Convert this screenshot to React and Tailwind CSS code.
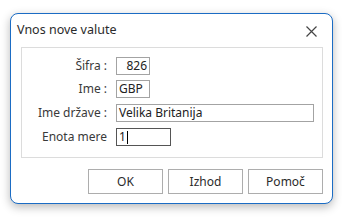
import React from 'react';

const rows = [
  { label: 'Šifra :', value: '826', w: 'w-[34px]', align: 'text-right', mt: 'mt-[9px]' },
  { label: 'Ime :', value: 'GBP', w: 'w-[34px]', align: 'text-left', mt: 'mt-[5px]' },
  { label: 'Ime države :', value: 'Velika Britanija', w: 'w-[198px]', align: 'text-left', mt: 'mt-[6px]' },
  { label: 'Enota mere', value: '1', w: 'w-[55px]', align: 'text-left', mt: 'mt-[6px]', focus: true },
];

export default function App() {
  return (
    <div className="w-[342px] h-[220px] bg-white overflow-hidden" style={{ fontFamily: '"Noto Sans", "Open Sans", sans-serif' }}>
      {/* okno */}
      <div className="ml-[10px] mt-[13px] w-[323px] h-[191px] bg-white border border-[#1b6cc4] rounded-[8px] shadow-[0_3px_10px_rgba(0,0,0,0.28)] flex flex-col">
        <div className="h-[33px] flex items-center justify-between pl-[6px] pr-[15px]">
          <span className="text-[12.5px] text-[#2b2b2b]">Vnos nove valute</span>
          <svg width="11" height="11" viewBox="0 0 11 11" className="mt-[2px]">
            <path d="M0.5 0.5 L10.5 10.5 M10.5 0.5 L0.5 10.5" stroke="#444" strokeWidth="1.2" />
          </svg>
        </div>

        <div className="ml-[10px] w-[302px] h-[111px] border border-[#dcdcdc] flex flex-col">
          {rows.map((r) => (
            <div key={r.label} className={`flex items-center h-[18px] ${r.mt}`}>
              <div className="w-[85px] text-right text-[12px] text-[#3a3a3a] leading-none">{r.label}</div>
              <div
                className={`ml-[9px] h-[18px] ${r.w} border ${r.focus ? 'border-[#555]' : 'border-[#a3a3a3]'} ${r.align} text-[12px] text-[#222] leading-[16px] px-[2px] flex items-center ${r.align === 'text-right' ? 'justify-end' : ''}`}
              >
                {r.value}
                {r.focus && <span className="ml-[1px] w-px h-[13px] bg-black" />}
              </div>
            </div>
          ))}
        </div>

        <div className="flex justify-end gap-[5px] mr-[9px] mt-[11px]">
          {['OK', 'Izhod', 'Pomoč'].map((b) => (
            <button key={b} type="button" className="w-[75px] h-[25px] bg-white border border-[#adadad] text-[12px] text-[#2b2b2b]">
              {b}
            </button>
          ))}
        </div>
      </div>
    </div>
  );
}
